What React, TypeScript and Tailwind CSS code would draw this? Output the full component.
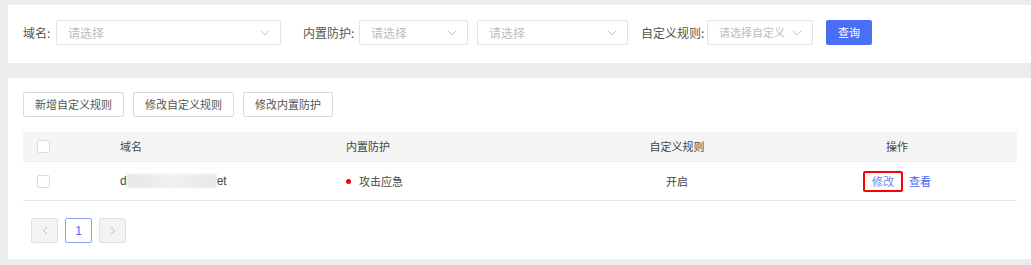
import React from "react";

const Chevron = ({ className = "" }: { className?: string }) => (
  <svg width="10" height="6" viewBox="0 0 10 6" className={className}>
    <path d="M1 1 L5 5 L9 1" fill="none" stroke="#c4c4c4" strokeWidth="1" />
  </svg>
);

const Select = ({ w, text, small }: { w: string; text: string; small?: boolean }) => (
  <div className={`${w} h-[25px] border border-[#e3e3e3] rounded-[2px] bg-white flex items-center justify-between pl-[11px] pr-[10px]`}>
    <span className={`${small ? "text-[11px] mr-[4px]" : "text-[12px]"} text-[#bdbdbd] whitespace-nowrap overflow-hidden`}>{text}</span>
    <Chevron className="shrink-0" />
  </div>
);

const Checkbox = () => (
  <div className="w-[13px] h-[13px] border border-[#dcdcdc] rounded-[2px] bg-white" />
);

export default function App() {
  return (
    <div
      className="w-[1031px] h-[265px] bg-[#ececec] overflow-hidden pl-[8px] pt-[5px]"
      style={{ fontFamily: '"Noto Sans CJK SC", "Noto Sans", "Liberation Sans", sans-serif' }}
    >
      {/* filter card */}
      <div className="bg-white h-[58px] pt-[15px] pl-[15px] flex items-start">
        <div className="flex items-center h-[25px] text-[12px] text-[#555]">
          <span className="w-[33px]">域名:</span>
          <Select w="w-[225px]" text="请选择" />
          <span className="ml-[22px] w-[56px]">内置防护:</span>
          <Select w="w-[109px]" text="请选择" />
          <div className="ml-[9px]">
            <Select w="w-[151px]" text="请选择" />
          </div>
          <span className="ml-[13px] w-[66px]">自定义规则:</span>
          <Select w="w-[106px]" text="请选择自定义" small />
          <button className="ml-[13px] w-[46px] h-[25px] bg-[#4b6ef7] text-white text-[11px] rounded-[2px]">
            查询
          </button>
        </div>
      </div>

      {/* list card */}
      <div className="mt-[15px] bg-white h-[181px] pt-[14px] pl-[15px] pr-[14px]">
        <div className="flex gap-[9px] text-[11px] text-[#555]">
          <button className="w-[101px] h-[25px] border border-[#dadada] rounded-[2px] bg-white">新增自定义规则</button>
          <button className="w-[101px] h-[25px] border border-[#dadada] rounded-[2px] bg-white">修改自定义规则</button>
          <button className="w-[90px] h-[25px] border border-[#dadada] rounded-[2px] bg-white">修改内置防护</button>
        </div>

        <div className="mt-[15px] text-[11px]">
          <div className="grid grid-cols-[97px_226px_231px_200px_240px] h-[30px] bg-[#f5f5f5] items-center text-[#444] border-b border-[#ececec]">
            <div className="pl-[14px]"><Checkbox /></div>
            <div>域名</div>
            <div>内置防护</div>
            <div className="text-center">自定义规则</div>
            <div className="text-center">操作</div>
          </div>
          <div className="grid grid-cols-[97px_226px_231px_200px_240px] h-[39px] items-center text-[#444] border-b border-[#e5e5e5]">
            <div className="pl-[14px]"><Checkbox /></div>
            <div className="flex items-center" style={{ fontFamily: '"Liberation Sans", sans-serif' }}>
              <span className="text-[12px]">d</span>
              <div className="w-[90px] h-[14px] bg-gradient-to-r from-[#e6e6e6] via-[#f0f0f0] to-[#e8e8e8] blur-[1px]" />
              <span className="text-[12px]">et</span>
            </div>
            <div className="flex items-center">
              <span className="w-[5px] h-[5px] rounded-full bg-[#f00000] mr-[8px]" />
              <span>攻击应急</span>
            </div>
            <div className="text-center">开启</div>
            <div className="flex justify-center items-center gap-[6px]">
              <span className="border-2 border-[#f00] rounded-[2px] px-[7px] h-[21px] leading-[17px] text-[#6f88f2]">修改</span>
              <span className="text-[#3e63f0]">查看</span>
            </div>
          </div>
        </div>

        <div className="mt-[17px] ml-[8px] flex gap-[7px]">
          <div className="w-[27px] h-[25px] border border-[#e0e0e0] bg-[#f3f3f3] rounded-[2px] flex items-center justify-center">
            <svg width="6" height="9" viewBox="0 0 6 9"><path d="M5 1 L1.5 4.5 L5 8" fill="none" stroke="#bdbdbd" strokeWidth="1" /></svg>
          </div>
          <div className="w-[27px] h-[25px] border border-[#8aa0f7] bg-white rounded-[2px] flex items-center justify-center text-[12px] text-[#4b6ef7]" style={{ fontFamily: '"Liberation Sans", sans-serif' }}>
            1
          </div>
          <div className="w-[27px] h-[25px] border border-[#e0e0e0] bg-[#f3f3f3] rounded-[2px] flex items-center justify-center">
            <svg width="6" height="9" viewBox="0 0 6 9"><path d="M1 1 L4.5 4.5 L1 8" fill="none" stroke="#bdbdbd" strokeWidth="1" /></svg>
          </div>
        </div>
      </div>
    </div>
  );
}
